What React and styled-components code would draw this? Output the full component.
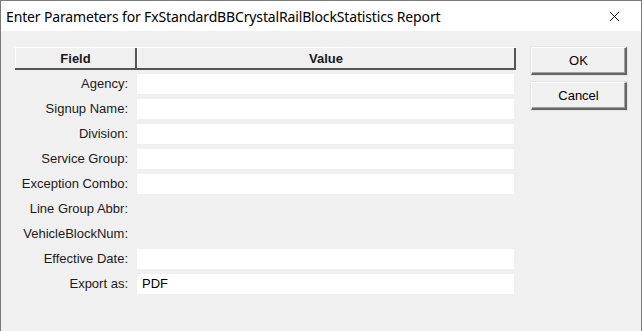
import React from 'react'
import { styled, createGlobalStyle } from 'styled-components'

const GlobalStyle = createGlobalStyle`
  html, body {
    margin: 0;
    padding: 0;
    background: #f0f0f0;
  }
  body {
    font-family: "Liberation Sans", Arial, sans-serif;
  }
`

const fields = [
  { label: 'Agency:', input: true },
  { label: 'Signup Name:', input: true },
  { label: 'Division:', input: true },
  { label: 'Service Group:', input: true },
  { label: 'Exception Combo:', input: true },
  { label: 'Line Group Abbr:', input: false },
  { label: 'VehicleBlockNum:', input: false },
  { label: 'Effective Date:', input: true },
  { label: 'Export as:', input: true, value: 'PDF' },
]

const App = () => {
  return (
    <>
      <GlobalStyle />
      <Window>
        <TitleBar>
          <Title>Enter Parameters for FxStandardBBCrystalRailBlockStatistics Report</Title>
          <CloseIcon viewBox="0 0 12 12">
            <path d="M1 1 L11 11 M11 1 L1 11" stroke="#000" strokeWidth="1" fill="none" />
          </CloseIcon>
        </TitleBar>
        <Body>
          <Grid>
            <Header>
              <HeaderCell $w={119}>Field</HeaderCell>
              <HeaderCell $grow>Value</HeaderCell>
            </Header>
            {fields.map((f) => (
              <Row key={f.label}>
                <Label>{f.label}</Label>
                {f.input ? <ValueBox>{f.value}</ValueBox> : <Empty />}
              </Row>
            ))}
          </Grid>
          <Buttons>
            <Button>OK</Button>
            <Button>Cancel</Button>
          </Buttons>
        </Body>
      </Window>
    </>
  )
}

const Window = styled.div`
  width: 642px;
  height: 331px;
  box-sizing: border-box;
  border: 1px solid #7a7a7a;
  border-bottom: none;
  background: #f0f0f0;
  display: flex;
  flex-direction: column;
`

const TitleBar = styled.div`
  height: 30px;
  background: #fff;
  display: flex;
  align-items: center;
  justify-content: space-between;
  padding: 0 21px 0 5px;
`

const Title = styled.div`
  font-family: "Noto Sans", "Open Sans", sans-serif;
  font-size: 14px;
  color: #000;
  letter-spacing: -0.15px;
`

const CloseIcon = styled.svg`
  width: 11px;
  height: 11px;
`

const Body = styled.div`
  display: flex;
  padding: 16px 0 0 14px;
  gap: 15px;
`

const Grid = styled.div`
  width: 501px;
  display: flex;
  flex-direction: column;
`

const Header = styled.div`
  display: flex;
  height: 23px;
  border-top: 1px solid #fff;
  border-bottom: 2px solid #555;
  box-sizing: border-box;
  margin-bottom: 4px;
`

const HeaderCell = styled.div`
  ${(p) => (p.$grow ? 'flex: 1;' : `width: ${p.$w}px;`)}
  display: flex;
  align-items: center;
  justify-content: center;
  font-weight: bold;
  font-size: 13px;
  color: #1a1a1a;
  border-right: 2px solid #555;
  border-left: 1px solid #fff;
`

const Row = styled.div`
  display: flex;
  height: 25px;
  align-items: flex-start;
`

const Label = styled.div`
  width: 113px;
  text-align: right;
  font-size: 13px;
  color: #1a1a1a;
  line-height: 20px;
  padding-right: 9px;
  white-space: nowrap;
`

const ValueBox = styled.div`
  width: 377px;
  height: 20px;
  background: #fff;
  font-size: 13px;
  line-height: 20px;
  padding-left: 5px;
  box-sizing: border-box;
  color: #000;
`

const Empty = styled.div`
  height: 20px;
`

const Buttons = styled.div`
  display: flex;
  flex-direction: column;
  gap: 7px;
`

const Button = styled.div`
  width: 96px;
  height: 28px;
  box-sizing: border-box;
  display: flex;
  align-items: center;
  justify-content: center;
  font-size: 13px;
  color: #000;
  background: #f0f0f0;
  border-top: 1px solid #fff;
  border-left: 1px solid #fff;
  border-right: 2px solid #666;
  border-bottom: 2px solid #666;
  box-shadow: inset -1px -1px 0 #a0a0a0, 0 0 0 1px #e3e3e3;
`

export default App
